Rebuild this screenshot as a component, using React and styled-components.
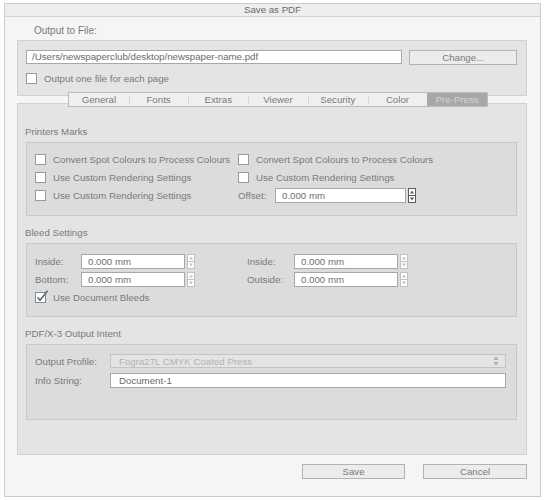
import React from "react";
import styled, { createGlobalStyle } from "styled-components";

const GlobalStyle = createGlobalStyle`
  body {
    margin: 0;
    background: #ffffff;
    font-family: "Liberation Sans", Arial, sans-serif;
    font-size: 9.7px;
    color: #7a7a7a;
  }
`;

function Spinner({ dark }) {
  const c = dark ? "#5a5a5a" : "#c2c2c2";
  return (
    <SpinBox width="8" height="15" viewBox="0 0 8 15">
      <rect x="0.5" y="0.5" width="7" height="14" fill="#fff" stroke={c} />
      <line x1="0.5" y1="7.5" x2="7.5" y2="7.5" stroke={c} />
      <path d="M4 2.5 L6 5.5 L2 5.5 Z" fill={c} />
      <path d="M4 12.5 L6 9.5 L2 9.5 Z" fill={c} />
    </SpinBox>
  );
}

function Check({ checked, children }) {
  return (
    <CheckLabel>
      {checked ? (
        <svg width="14" height="13" viewBox="0 0 14 13" style={{ marginTop: -2 }}>
          <rect x="0.5" y="2.5" width="10" height="10" fill="#fff" stroke="#8a8a8a" />
          <path d="M2.6 7.2 L5 10.2 L12.6 0.8" fill="none" stroke="#52657c" strokeWidth="1.5" />
        </svg>
      ) : (
        <Box />
      )}
      <span>{children}</span>
    </CheckLabel>
  );
}

function MmField({ label, labelWidth, width, dark }) {
  return (
    <FieldRow>
      <FieldLabel $w={labelWidth}>{label}</FieldLabel>
      <TextBox $w={width}>0.000 mm</TextBox>
      <Spinner dark={dark} />
    </FieldRow>
  );
}

const tabs = ["General", "Fonts", "Extras", "Viewer", "Security", "Color", "Pre-Press"];

export default function App() {
  return (
    <>
      <GlobalStyle />
      <Window>
        <TitleBar>Save as PDF</TitleBar>
        <Content>
          <FileLabel>Output to File:</FileLabel>
          <TopPanel>
            <InputRow>
              <PathInput>/Users/newspaperclub/desktop/newspaper-name.pdf</PathInput>
              <Button $w={108}>Change...</Button>
            </InputRow>
            <TopCheck>
              <Check>Output one file for each page</Check>
            </TopCheck>
          </TopPanel>
          <TabBar>
            {tabs.map((t, i) => (
              <Tab key={t} $active={t === "Pre-Press"} $sep={i > 0 && t !== "Pre-Press"}>
                {t}
              </Tab>
            ))}
          </TabBar>
          <LowerPanel>
            <SectionLabel>Printers Marks</SectionLabel>
            <Group $h={74} $pt={7}>
              <MarksGrid>
                <Check>Convert Spot Colours to Process Colours</Check>
                <Check>Convert Spot Colours to Process Colours</Check>
                <Check>Use Custom Rendering Settings</Check>
                <Check>Use Custom Rendering Settings</Check>
                <Check>Use Custom Rendering Settings</Check>
                <MmField label="Offset:" labelWidth={37} width={131} dark />
              </MarksGrid>
            </Group>
            <SectionLabel $gap>Bleed Settings</SectionLabel>
            <Group $h={74} $pt={8}>
              <BleedGrid>
                <MmField label="Inside:" labelWidth={46} width={104} />
                <MmField label="Inside:" labelWidth={47} width={104} />
                <MmField label="Bottom:" labelWidth={46} width={104} />
                <MmField label="Outside:" labelWidth={47} width={104} />
                <Check checked>Use Document Bleeds</Check>
              </BleedGrid>
            </Group>
            <SectionLabel $gap>PDF/X-3 Output Intent</SectionLabel>
            <Group $h={76} $pt={9}>
              <IntentRow>
                <FieldLabel $w={75}>Output Profile:</FieldLabel>
                <Select>
                  <span>Fogra27L CMYK Coated Press</span>
                  <svg width="6" height="10" viewBox="0 0 6 10">
                    <path d="M3 0.5 L5.5 4 L0.5 4 Z" fill="#a9a9a9" />
                    <path d="M3 9.5 L5.5 6 L0.5 6 Z" fill="#a9a9a9" />
                  </svg>
                </Select>
              </IntentRow>
              <IntentRow $mt={5}>
                <FieldLabel $w={75}>Info String:</FieldLabel>
                <InfoInput>Document-1</InfoInput>
              </IntentRow>
            </Group>
          </LowerPanel>
          <Footer>
            <Button $w={103}>Save</Button>
            <Button $w={104}>Cancel</Button>
          </Footer>
        </Content>
      </Window>
    </>
  );
}

const Window = styled.div`
  box-sizing: border-box;
  width: 537px;
  height: 494px;
  margin: 3px 0 0 4px;
  border: 1px solid #cbcbcb;
  background: #f5f5f5;
  display: flex;
  flex-direction: column;
`;

const TitleBar = styled.div`
  height: 12px;
  line-height: 12px;
  border-bottom: 1px solid #d4d4d4;
  background: #ededed;
  text-align: center;
  color: #6a6a6a;
`;

const Content = styled.div`
  display: flex;
  flex-direction: column;
  padding: 0 13px 0 12px;
`;

const FileLabel = styled.div`
  line-height: 12px;
  margin: 8px 0 3px 17px;
  font-size: 10px;
`;

const TopPanel = styled.div`
  box-sizing: border-box;
  height: 56px;
  border: 1px solid #d0d0d0;
  background: #e4e4e4;
  padding: 9px 9px 0 8px;
`;

const InputRow = styled.div`
  display: flex;
  gap: 7px;
`;

const PathInput = styled.div`
  box-sizing: border-box;
  width: 378px;
  height: 14px;
  line-height: 12px;
  padding-left: 5px;
  border: 1px solid #a8a8a8;
  background: #ffffff;
  color: #6a6a6a;
`;

const Button = styled.div`
  box-sizing: border-box;
  width: ${(p) => p.$w}px;
  height: 15px;
  line-height: 13px;
  border: 1px solid #b3b3b3;
  background: #ececec;
  text-align: center;
  color: #7a7a7a;
`;

const TopCheck = styled.div`
  margin-top: 4px;
`;

const CheckLabel = styled.div`
  display: flex;
  align-items: center;
  gap: 7px;
  height: 18px;
  white-space: nowrap;
  & > svg {
    margin-right: -3px;
  }
`;

const Box = styled.div`
  box-sizing: border-box;
  width: 11px;
  height: 11px;
  border: 1px solid #9a9a9a;
  background: #ffffff;
`;

const TabBar = styled.div`
  position: relative;
  z-index: 1;
  box-sizing: border-box;
  display: flex;
  width: 420px;
  height: 15px;
  margin: -4px 0 0 51px;
  border: 1px solid #bcbcbc;
  background: #efefef;
`;

const Tab = styled.div`
  position: relative;
  flex: 1;
  line-height: 13px;
  text-align: center;
  background: ${(p) => (p.$active ? "#a8a8a8" : "transparent")};
  color: ${(p) => (p.$active ? "#d3d3d3" : "#7a7a7a")};
  &::before {
    content: "";
    display: ${(p) => (p.$sep ? "block" : "none")};
    position: absolute;
    left: 0;
    top: 3px;
    width: 1px;
    height: 8px;
    background: #d6d6d6;
  }
`;

const LowerPanel = styled.div`
  box-sizing: border-box;
  height: 352px;
  margin-top: -4px;
  border: 1px solid #d2d2d2;
  background: #e4e4e4;
  padding: 22px 9px 0 8px;
  display: flex;
  flex-direction: column;
`;

const SectionLabel = styled.div`
  line-height: 12px;
  margin: ${(p) => (p.$gap ? "11px" : "0")} 0 4px -1px;
`;

const Group = styled.div`
  box-sizing: border-box;
  flex-shrink: 0;
  height: ${(p) => p.$h}px;
  border: 1px solid #c9c9c9;
  background: #dcdcdc;
  padding: ${(p) => p.$pt}px 10px 0 8px;
`;

const MarksGrid = styled.div`
  display: grid;
  grid-template-columns: 203px 1fr;
  grid-auto-rows: 18px;
`;

const BleedGrid = styled.div`
  display: grid;
  grid-template-columns: 212px 1fr;
  grid-auto-rows: 18px;
`;

const FieldRow = styled.div`
  display: flex;
  align-items: center;
  height: 18px;
`;

const FieldLabel = styled.div`
  width: ${(p) => p.$w}px;
  flex-shrink: 0;
  white-space: nowrap;
`;

const TextBox = styled.div`
  box-sizing: border-box;
  width: ${(p) => p.$w}px;
  height: 15px;
  line-height: 13px;
  padding-left: 6px;
  border: 1px solid #a8a8a8;
  background: #ffffff;
  color: #6f6f6f;
`;

const SpinBox = styled.svg`
  margin-left: 2px;
  flex-shrink: 0;
`;

const IntentRow = styled.div`
  display: flex;
  align-items: center;
  margin-top: ${(p) => p.$mt || 0}px;
`;

const Select = styled.div`
  box-sizing: border-box;
  flex: 1;
  height: 14px;
  display: flex;
  align-items: center;
  justify-content: space-between;
  padding: 0 6px 0 8px;
  border: 1px solid #c4c4c4;
  background: #e4e4e4;
  color: #b2b2b2;
`;

const InfoInput = styled.div`
  box-sizing: border-box;
  flex: 1;
  height: 15px;
  line-height: 13px;
  padding-left: 8px;
  border: 1px solid #a8a8a8;
  background: #ffffff;
  color: #6a6a6a;
`;

const Footer = styled.div`
  display: flex;
  justify-content: flex-end;
  gap: 18px;
  margin-top: 9px;
`;
